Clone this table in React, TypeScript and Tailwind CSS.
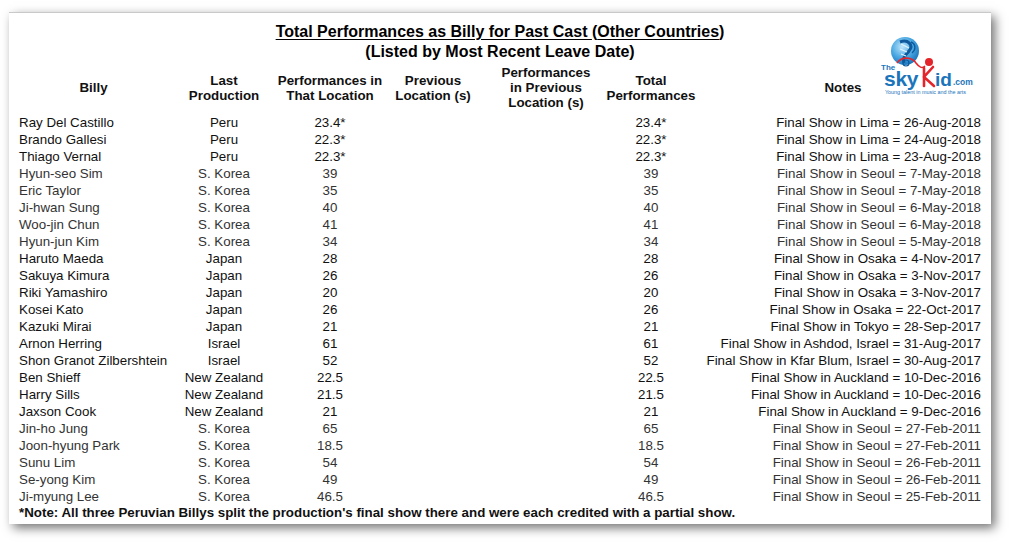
import React from 'react';

type Row = {
  name: string;
  last: string;
  perf: string;
  total: string;
  note: string;
};

const rows: Row[] = [
  { name: 'Ray Del Castillo', last: 'Peru', perf: '23.4*', total: '23.4*', note: 'Final Show in Lima = 26-Aug-2018' },
  { name: 'Brando Gallesi', last: 'Peru', perf: '22.3*', total: '22.3*', note: 'Final Show in Lima = 24-Aug-2018' },
  { name: 'Thiago Vernal', last: 'Peru', perf: '22.3*', total: '22.3*', note: 'Final Show in Lima = 23-Aug-2018' },
  { name: 'Hyun-seo Sim', last: 'S. Korea', perf: '39', total: '39', note: 'Final Show in Seoul = 7-May-2018' },
  { name: 'Eric Taylor', last: 'S. Korea', perf: '35', total: '35', note: 'Final Show in Seoul = 7-May-2018' },
  { name: 'Ji-hwan Sung', last: 'S. Korea', perf: '40', total: '40', note: 'Final Show in Seoul = 6-May-2018' },
  { name: 'Woo-jin Chun', last: 'S. Korea', perf: '41', total: '41', note: 'Final Show in Seoul = 6-May-2018' },
  { name: 'Hyun-jun Kim', last: 'S. Korea', perf: '34', total: '34', note: 'Final Show in Seoul = 5-May-2018' },
  { name: 'Haruto Maeda', last: 'Japan', perf: '28', total: '28', note: 'Final Show in Osaka = 4-Nov-2017' },
  { name: 'Sakuya Kimura', last: 'Japan', perf: '26', total: '26', note: 'Final Show in Osaka = 3-Nov-2017' },
  { name: 'Riki Yamashiro', last: 'Japan', perf: '20', total: '20', note: 'Final Show in Osaka = 3-Nov-2017' },
  { name: 'Kosei Kato', last: 'Japan', perf: '26', total: '26', note: 'Final Show in Osaka = 22-Oct-2017' },
  { name: 'Kazuki Mirai', last: 'Japan', perf: '21', total: '21', note: 'Final Show in Tokyo = 28-Sep-2017' },
  { name: 'Arnon Herring', last: 'Israel', perf: '61', total: '61', note: 'Final Show in Ashdod, Israel = 31-Aug-2017' },
  { name: 'Shon Granot Zilbershtein', last: 'Israel', perf: '52', total: '52', note: 'Final Show in Kfar Blum, Israel = 30-Aug-2017' },
  { name: 'Ben Shieff', last: 'New Zealand', perf: '22.5', total: '22.5', note: 'Final Show in Auckland = 10-Dec-2016' },
  { name: 'Harry Sills', last: 'New Zealand', perf: '21.5', total: '21.5', note: 'Final Show in Auckland = 10-Dec-2016' },
  { name: 'Jaxson Cook', last: 'New Zealand', perf: '21', total: '21', note: 'Final Show in Auckland = 9-Dec-2016' },
  { name: 'Jin-ho Jung', last: 'S. Korea', perf: '65', total: '65', note: 'Final Show in Seoul = 27-Feb-2011' },
  { name: 'Joon-hyung Park', last: 'S. Korea', perf: '18.5', total: '18.5', note: 'Final Show in Seoul = 27-Feb-2011' },
  { name: 'Sunu Lim', last: 'S. Korea', perf: '54', total: '54', note: 'Final Show in Seoul = 26-Feb-2011' },
  { name: 'Se-yong Kim', last: 'S. Korea', perf: '49', total: '49', note: 'Final Show in Seoul = 26-Feb-2011' },
  { name: 'Ji-myung Lee', last: 'S. Korea', perf: '46.5', total: '46.5', note: 'Final Show in Seoul = 25-Feb-2011' },
];

const cols = 'grid grid-cols-[169px_92px_120px_86px_140px_70px_1fr]';

// theskykid.com logo, drawn roughly
const Logo = () => (
  <svg width="102" height="60" viewBox="0 0 102 60">
    <defs>
      <radialGradient id="ball" cx="0.4" cy="0.35" r="0.7">
        <stop offset="0" stopColor="#bfe6fb" />
        <stop offset="0.55" stopColor="#4aa8e2" />
        <stop offset="1" stopColor="#1670b8" />
      </radialGradient>
    </defs>
    <circle cx="27" cy="15" r="14" fill="url(#ball)" />
    <path d="M22 6 C30 3 36 9 31 15 C28 19 24 21 26 27" stroke="#0e5a9c" strokeWidth="3" fill="none" />
    <path d="M23 8 L31 12 M22 13 L29 16 M23 18 L28 20" stroke="#dff3ff" strokeWidth="1.2" />
    <path d="M33 6 C38 8 38 14 34 17" stroke="#0e5a9c" strokeWidth="1.4" fill="none" />
    <path d="M19 27 C24 20 34 21 38 27 C41 31 44 33 47 30" stroke="#e3242b" strokeWidth="1.6" fill="none" />
    <circle cx="28" cy="27" r="3" stroke="#0e5a9c" strokeWidth="1.2" fill="none" />
    <circle cx="51" cy="26" r="4" fill="#e3242b" />
    <path d="M46 32 L46 50 M55 31 L46 41 L56 50" stroke="#e3242b" strokeWidth="2.6" fill="none" strokeLinecap="round" />
    <text x="3" y="34" fontFamily="Liberation Sans, Arial, sans-serif" fontWeight="bold" fontSize="8" fill="#1b75bb">The</text>
    <text x="6" y="50" fontFamily="Liberation Sans, Arial, sans-serif" fontWeight="bold" fontSize="21" fill="#1b75bb" letterSpacing="-0.3">sky</text>
    <text x="57" y="50" fontFamily="Liberation Sans, Arial, sans-serif" fontWeight="bold" fontSize="19" fill="#1b75bb">id</text>
    <text x="75" y="49" fontFamily="Liberation Sans, Arial, sans-serif" fontWeight="bold" fontSize="8.5" fill="#1b75bb">.com</text>
    <text x="7" y="58" fontFamily="Liberation Sans, Arial, sans-serif" fontSize="5.4" fill="#1b75bb">Young talent in music and the arts</text>
  </svg>
);

export default function App() {
  return (
    <div className="w-[1009px] h-[542px] bg-white pt-[12px] pl-[9px] font-['Liberation_Sans',Arial,sans-serif]">
      <div className="relative w-[982px] h-[512px] bg-white border-t border-[#c9c9c9] shadow-[4px_4px_10px_rgba(0,0,0,0.55)] text-[#111]">
        <div className="absolute left-[869px] top-[23px]">
          <Logo />
        </div>

        <div className="pt-[9px] text-center font-bold text-[16px] leading-[20px] text-black">
          <div>
            <span className="underline underline-offset-2">Total Performances as Billy for Past Cast </span>
            (<span className="underline underline-offset-2">Other Countries</span>)
          </div>
          <div>(Listed by Most Recent Leave Date)</div>
        </div>

        <div className={`${cols} mt-[3px] h-[45px] text-[13.33px] leading-[15px] font-bold text-[#111] whitespace-nowrap`}>
          <div className="flex items-center justify-center">Billy</div>
          <div className="flex items-center justify-center text-center">Last<br />Production</div>
          <div className="flex items-center justify-center text-center">Performances in<br />That Location</div>
          <div className="flex items-center justify-center text-center">Previous<br />Location (s)</div>
          <div className="flex items-center justify-center text-center">Performances<br />in Previous<br />Location (s)</div>
          <div className="flex items-center justify-center text-center">Total<br />Performances</div>
          <div className="flex items-center justify-center pl-[19px] pr-[10px]">Notes</div>
        </div>

        <div className="mt-[4px] text-[13.33px] leading-[17px] whitespace-nowrap">
          {rows.map((r) => (
            <div
              key={r.name}
              className={`${cols} h-[17px] ${r.last === 'S. Korea' ? 'text-[#333]' : 'text-[#111]'}`}
            >
              <div className="pl-[10px]">{r.name}</div>
              <div className="flex justify-center">{r.last}</div>
              <div className="flex justify-center">{r.perf}</div>
              <div />
              <div />
              <div className="flex justify-center">{r.total}</div>
              <div className="text-right pr-[10px]">{r.note}</div>
            </div>
          ))}
        </div>

        <div className="pl-[10px] text-[13.33px] leading-[16px] font-bold text-[#111] whitespace-nowrap">
          *Note: All three Peruvian Billys split the production's final show there and were each credited with a partial show.
        </div>
      </div>
    </div>
  );
}
